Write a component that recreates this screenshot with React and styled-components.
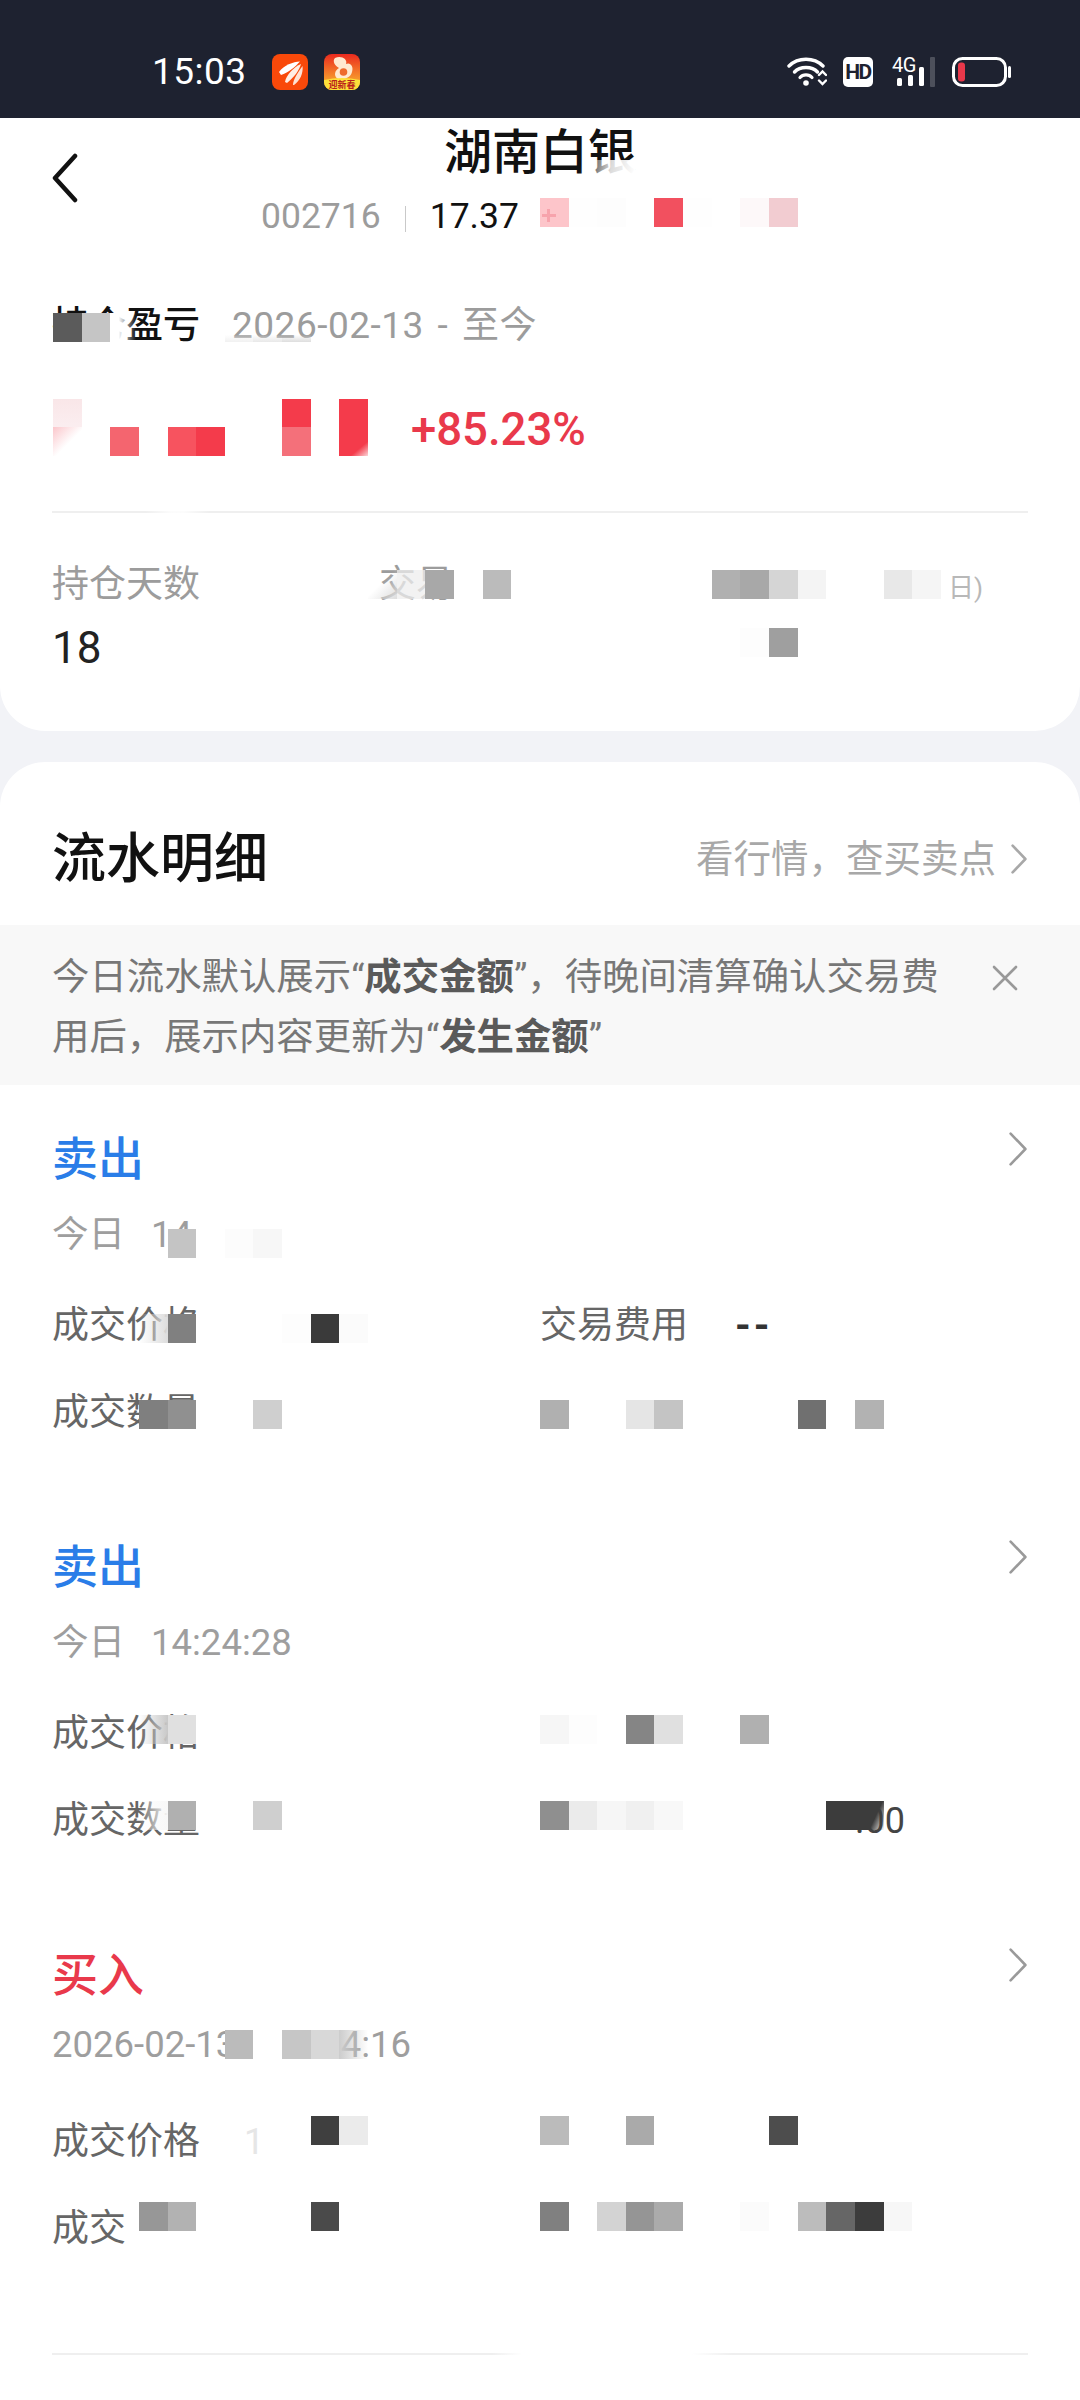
import React from "react";
import styled, { createGlobalStyle } from "styled-components";

const FONT = `Roboto, "Noto Sans CJK SC", sans-serif`;

const Global = createGlobalStyle`
  html, body { margin: 0; padding: 0; background: #f2f3f7; }
  body { font-family: ${FONT}; }
`;

const Page = styled.div`
  position: relative;
  width: 1080px;
  height: 2400px;
  overflow: hidden;
  background: #f2f3f7;
  font-family: ${FONT};
`;

const StatusBar = styled.div`
  height: 118px;
  box-sizing: border-box;
  background: #1e2230;
  display: flex;
  align-items: flex-start;
  padding: 54px 69px 0 152px;
  color: #fff;
`;
const Clock = styled.div`
  font-size: 37px;
  line-height: 36px;
  width: 120px;
  letter-spacing: 0.5px;
`;
const AppIcon = styled.svg`
  width: 36px;
  height: 36px;
  margin-right: 16px;
  display: block;
`;
const StatusRight = styled.div`
  margin-left: auto;
  display: flex;
  align-items: flex-start;
  padding-top: 3px;
`;
const WifiIcon = styled.svg`
  width: 40px;
  height: 30px;
  margin-right: 16px;
`;
const HdBadge = styled.div`
  width: 30px;
  height: 30px;
  background: #fff;
  border-radius: 5px;
  color: #1e2230;
  font-size: 21px;
  font-weight: 700;
  letter-spacing: -1.5px;
  display: flex;
  align-items: center;
  justify-content: center;
  margin-right: 17px;
`;
const SignalIcon = styled.svg`
  width: 45px;
  height: 30px;
  margin-right: 17px;
`;
const BatteryIcon = styled.svg`
  width: 59px;
  height: 30px;
`;

const TopCard = styled.section`
  background: #fff;
  border-radius: 0 0 45px 45px;
  height: 613px;
  box-sizing: border-box;
  padding: 0 52px;
  display: flex;
  flex-direction: column;
`;
const Header = styled.header`
  position: relative;
  height: 135px;
  flex: none;
  display: flex;
  flex-direction: column;
  align-items: center;
`;
const BackButton = styled.svg`
  position: absolute;
  left: 0;
  top: 35px;
  width: 26px;
  height: 50px;
`;
const Title = styled.h1`
  margin: 0;
  font-size: 48px;
  font-weight: 500;
  line-height: 64px;
  color: #111;
  height: 78px;
  padding-top: 3px;
  box-sizing: border-box;
`;
const QuoteRow = styled.div`
  align-self: flex-start;
  display: flex;
  align-items: center;
  height: 40px;
  margin-left: 209px;
  font-size: 35.5px;
`;
const Code = styled.span`
  color: #9c9c9c;
`;
const Sep = styled.i`
  width: 1px;
  height: 26px;
  background: #c9c9c9;
  margin: 6px 24px 0 24px;
`;
const Price = styled.span`
  color: #111;
`;
const ProfitHead = styled.div`
  display: flex;
  align-items: center;
  margin-top: 47px;
  height: 44px;
  font-size: 37px;
`;
const ProfitLabel = styled.span`
  font-weight: 500;
  color: #111;
  width: 180px;
`;
const DateRange = styled.span`
  color: #9c9c9c;
  letter-spacing: 0.5px;
  word-spacing: 4px;
`;
const ProfitRow = styled.div`
  margin-top: 61px;
  height: 50px;
  padding-left: 359px;
  font-size: 45.5px;
  line-height: 50px;
  color: #e9394b;
  font-weight: 500;
`;
const Rule = styled.hr`
  margin: 56px 0 0;
  border: 0;
  flex: none;
  height: 2px;
  background: #efefef;
`;
const Stats = styled.div`
  margin-top: 50px;
  display: grid;
  grid-template-columns: 327px 1fr;
`;
const StatColumn = styled.div`
  display: flex;
  flex-direction: column;
`;
const StatLabel = styled.div`
  font-size: 37px;
  line-height: 44px;
  color: #9c9c9c;
`;
const StatValue = styled.div`
  margin-top: 16px;
  font-size: 44px;
  line-height: 50px;
  color: #222;
`;
const Tail = styled.span`
  position: absolute;
  left: 948px;
  top: 568px;
  font-size: 26px;
  line-height: 40px;
  color: #b8b8b8;
`;

const FlowCard = styled.section`
  margin-top: 31px;
  background: #fff;
  border-radius: 45px 45px 0 0;
  height: 1638px;
  display: flex;
  flex-direction: column;
`;
const FlowHead = styled.div`
  height: 163px;
  flex: none;
  box-sizing: border-box;
  padding: 62px 52px 0;
  display: flex;
  align-items: flex-start;
  justify-content: space-between;
`;
const FlowTitle = styled.h2`
  margin: 0;
  font-size: 54px;
  line-height: 72px;
  font-weight: 500;
  color: #111;
`;
const MarketLink = styled.div`
  display: flex;
  align-items: center;
  gap: 14px;
  margin-top: 13px;
  font-size: 37.5px;
  line-height: 44px;
  color: #a8a8a8;
`;
const Chevron = styled.svg`
  width: ${(p) => p.$w}px;
  height: ${(p) => p.$h}px;
  display: block;
  flex: none;
`;
const Notice = styled.div`
  height: 160px;
  flex: none;
  box-sizing: border-box;
  background: #f8f8f8;
  padding: 22px 62px 0 52px;
  display: flex;
  justify-content: space-between;
  font-size: 37.4px;
  line-height: 60px;
  color: #777;
`;
const NoticeText = styled.p`
  margin: 0;
  width: 892px;
  b { color: #5a5a5a; font-weight: 700; }
`;
const CloseIcon = styled.svg`
  width: 26px;
  height: 26px;
  margin-top: 18px;
  flex: none;
`;
const Trade = styled.article`
  height: 408px;
  flex: none;
  box-sizing: border-box;
  padding: 46px 52px 0;
  display: flex;
  flex-direction: column;
`;
const TradeTop = styled.div`
  display: flex;
  align-items: flex-start;
  justify-content: space-between;
  height: 56px;
`;
const TradeKind = styled.div`
  font-size: 46px;
  line-height: 56px;
  font-weight: 500;
  color: ${(p) => (p.$buy ? "#e9394b" : "#2a7de8")};
`;
const TradeTime = styled.div`
  margin-top: ${(p) => (p.$wide ? 20 : 26)}px;
  margin-bottom: ${(p) => (p.$wide ? 6 : 0)}px;
  height: 44px;
  display: flex;
  gap: ${(p) => (p.$wide ? 34 : 26)}px;
  font-size: 36.5px;
  line-height: 44px;
  color: #9e9e9e;
`;
const Row = styled.div`
  margin-top: ${(p) => p.$top}px;
  height: 44px;
  display: grid;
  grid-template-columns: 488px 195px 1fr;
  font-size: 37px;
  line-height: 44px;
  color: #666;
`;
const FaintDigit = styled.span`
  color: #e6e6e6;
  margin-left: 44px;
  font-size: 36px;
`;
const Dashes = styled.span`
  color: #333;
  font-size: 40px;
  font-weight: 700;
  letter-spacing: 3px;
`;
const Cents = styled.span`
  color: #444;
  padding-left: 120px;
  font-size: 36px;
`;
const BottomRule = styled.hr`
  position: absolute;
  left: 52px;
  right: 52px;
  top: 2353px;
  margin: 0;
  border: 0;
  height: 2px;
  background: linear-gradient(90deg, #efefef 0, #efefef 440px, #fff 470px, #fff 640px, #efefef 680px);
`;

const MosaicLayer = styled.div`
  position: absolute;
  inset: 0;
  pointer-events: none;
`;
const Strip = styled.div`
  position: absolute;
  left: 53px;
  top: ${(p) => p.$top}px;
  display: grid;
  grid-template-columns: repeat(35, 28.65px);
  height: 29px;
`;
const Cell = styled.i`
  grid-column: ${(p) => p.$col + 1};
  grid-row: 1;
  background: ${(p) => p.$bg};
`;
const Smudge = styled.div`
  position: absolute;
  left: ${(p) => p.$left}px;
  top: ${(p) => p.$top}px;
  width: ${(p) => p.$w}px;
  height: ${(p) => p.$h}px;
  background: ${(p) => p.$bg};
`;

const PLUS =
  "linear-gradient(#f7a3ac,#f7a3ac) 2px 16px/14px 3px no-repeat, linear-gradient(#f7a3ac,#f7a3ac) 7px 11px/3px 13px no-repeat, #fdc5ca";

const STRIPS = [
  [198, [[17, PLUS], [18, "#fefefe"], [19, "#fdfdfd"], [21, "#f2505f"], [22, "#fefefe"], [24, "#fdf8f9"], [25, "#f2ccd1"]]],
  [313, [[0, "#5b5b5b"], [1, "#c5c5c5"], [2, "linear-gradient(90deg,#fff 30%,transparent 90%)"], [6, "linear-gradient(180deg,transparent 75%,#f1f1f1)"], [7, "linear-gradient(180deg,transparent 75%,#e8e8e8)"], [8, "linear-gradient(180deg,transparent 75%,#dedede)"]]],
  [399, [[0, "linear-gradient(180deg,#f9e6e8,#fbeef0)"], [8, "#f43b4b"], [10, "#f43b4b"]]],
  [427, [[0, "linear-gradient(135deg,#fbc6cb,#fff 55%)"], [2, "#f4656f"], [4, "#f7535f"], [5, "#f43b4b"], [8, "#f4707a"], [10, "linear-gradient(140deg,#f43b4b 72%,#fbd6d9)"]]],
  [570, [[11, "linear-gradient(135deg,transparent 45%,#ddd)"], [12, "rgba(238,238,238,0.75)"], [13, "#a8a8a8"], [15, "#bbbbbb"], [23, "#b0b0b0"], [24, "#a8a8a8"], [25, "#d5d5d5"], [26, "#f4f4f4"], [29, "#e8e8e8"], [30, "#f5f5f5"]]],
  [628, [[24, "#fdfdfd"], [25, "#9f9f9f"]]],
  [1229, [[4, "#c4c4c4"], [6, "#fcfcfc"], [7, "#f7f7f7"]]],
  [1314, [[3, "linear-gradient(90deg,transparent,#ddd)"], [4, "#808080"], [5, "#ffffff"], [8, "#fdfdfd"], [9, "#3a3a3a"], [10, "#fbfbfb"]]],
  [1400, [[3, "#7f7f7f"], [4, "#909090"], [5, "#ffffff"], [7, "#cfcfcf"], [17, "#b0b0b0"], [20, "#e5e5e5"], [21, "#c4c4c4"], [26, "#707070"], [28, "#b2b2b2"]]],
  [1715, [[3, "linear-gradient(90deg,transparent,#c8c8c8)"], [4, "#e0e0e0"], [5, "#ffffff"], [17, "#f6f6f6"], [18, "#fdfdfd"], [20, "#858585"], [21, "#e0e0e0"], [24, "#b0b0b0"]]],
  [1801, [[3, "linear-gradient(90deg,transparent,#f8f8f8)"], [4, "#b0b0b0"], [5, "#ffffff"], [7, "#cfcfcf"], [17, "#8f8f8f"], [18, "#ebebeb"], [19, "#f6f6f6"], [20, "#f0f0f0"], [21, "#f8f8f8"], [27, "#3c3c3c"], [28, "linear-gradient(115deg,#3c3c3c 65%,transparent)"]]],
  [2030, [[6, "#bbbbbb"], [7, "#ffffff"], [8, "#c6c6c6"], [9, "#d8d8d8"], [10, "linear-gradient(90deg,#ccc,transparent)"]]],
  [2116, [[9, "#3f3f3f"], [10, "#ebebeb"], [17, "#bbbbbb"], [20, "#aaaaaa"], [25, "#4d4d4d"]]],
  [2202, [[3, "#979797"], [4, "#b2b2b2"], [9, "#4a4a4a"], [17, "#808080"], [19, "#d3d3d3"], [20, "#959595"], [21, "#ababab"], [24, "#fbfbfb"], [26, "#bcbcbc"], [27, "#666666"], [28, "#3c3c3c"], [29, "#f7f7f7"]]],
];

const ChevronRight = ({ w, h, color, sw }) => (
  <Chevron $w={w} $h={h} viewBox={`0 0 ${w} ${h}`} fill="none" stroke={color} strokeWidth={sw} strokeLinecap="round" strokeLinejoin="round">
    <path d={`M${sw} ${sw}L${w - sw} ${h / 2}L${sw} ${h - sw}`} />
  </Chevron>
);

const TRADES = [
  { kind: "卖出", day: "今日", time: "14", price: "成交价格", fee: "交易费用", dashes: "--", qty: "成交数量" },
  { kind: "卖出", day: "今日", time: "14:24:28", price: "成交价格", qty: "成交数量", cents: ".00" },
  { kind: "买入", buy: true, wide: true, day: "2026-02-13", time: "14:24:16", price: "成交价格", digit: "1", qty: "成交" },
];

export default function App() {
  return (
    <Page>
      <Global />
      <StatusBar>
        <Clock>15:03</Clock>
        <AppIcon viewBox="0 0 36 36">
          <rect width="36" height="36" rx="8" fill="#f9490a" />
          <path d="M7 18C12 11 21 8 28 7.5C23 13 16 19 9 21Z" fill="#fff" />
          <path d="M13 28C14 21 22 13 29 10C27 17 22 23 15 29Z" fill="#ffeee4" />
          <path d="M21 31C21 25 27 17 30.5 12C31.5 19 28 27 22 31Z" fill="#ffe2d3" />
        </AppIcon>
        <AppIcon viewBox="0 0 36 36">
          <defs>
            <linearGradient id="uc" x1="0" y1="0" x2="0" y2="1">
              <stop offset="0" stopColor="#ea2a1e" />
              <stop offset="0.7" stopColor="#f7972c" />
            </linearGradient>
          </defs>
          <rect width="36" height="36" rx="8" fill="url(#uc)" />
          <path d="M11 4C17 1 24 5 22 10C26 8 30 12 28 18C27 23 21 26 14 25C9 22 11 16 15 14C11 12 8 7 11 4Z" fill="#ffe9cf" />
          <circle cx="19.5" cy="18" r="3.8" fill="#ee6a2c" />
          <path d="M0 26Q18 22 36 26V28a8 8 0 0 1-8 8H8a8 8 0 0 1-8-8Z" fill="#fde03a" />
          <text x="18" y="34" textAnchor="middle" fontSize="9" fontWeight="700" fill="#b9201a" fontFamily='"Noto Sans CJK SC", sans-serif'>迎新春</text>
        </AppIcon>
        <StatusRight>
          <WifiIcon viewBox="0 0 40 30" fill="none" stroke="#fff" strokeLinecap="round">
            <path d="M2 9C11 0 27 0 36 9" strokeWidth="3.4" />
            <path d="M7.5 15C13 9 25 9 30.5 15" strokeWidth="3.4" />
            <path d="M13 20.5C16 17 22 17 25 20.5" strokeWidth="3.2" />
            <circle cx="19" cy="26" r="2.8" fill="#fff" stroke="none" />
            <path d="M32 18L35.5 14.5L39 18M32 23.5L35.5 27L39 23.5" strokeWidth="2.4" />
          </WifiIcon>
          <HdBadge>HD</HdBadge>
          <SignalIcon viewBox="0 0 45 30">
            <text x="2" y="15" fill="#fff" fontSize="20" fontFamily="Roboto, sans-serif" letterSpacing="-0.5">4G</text>
            <rect x="7" y="21" width="5" height="8" rx="1.5" fill="#fff" />
            <rect x="18" y="18" width="5" height="11" rx="1.5" fill="#fff" />
            <rect x="29" y="10" width="5" height="19" rx="1.5" fill="#fff" />
            <rect x="40" y="0" width="5" height="30" rx="1" fill="#4d505b" />
          </SignalIcon>
          <BatteryIcon viewBox="0 0 59 30">
            <rect x="1.5" y="1.5" width="52" height="27" rx="9" fill="none" stroke="#fff" strokeWidth="3" />
            <rect x="6" y="5.5" width="7" height="19" rx="3" fill="#e8384a" />
            <rect x="56" y="9" width="3" height="12" rx="1.5" fill="#fff" />
          </BatteryIcon>
        </StatusRight>
      </StatusBar>

      <TopCard>
        <Header>
          <BackButton viewBox="0 0 26 50" fill="none" stroke="#111" strokeWidth="4.5" strokeLinecap="round" strokeLinejoin="round">
            <path d="M23 3L3 25L23 47" />
          </BackButton>
          <Title>湖南白银</Title>
          <QuoteRow>
            <Code>002716</Code>
            <Sep />
            <Price>17.37</Price>
          </QuoteRow>
        </Header>
        <ProfitHead>
          <ProfitLabel>持仓盈亏</ProfitLabel>
          <DateRange>2026-02-13 - 至今</DateRange>
        </ProfitHead>
        <ProfitRow>+85.23%</ProfitRow>
        <Rule />
        <Stats>
          <StatColumn>
            <StatLabel>持仓天数</StatLabel>
            <StatValue>18</StatValue>
          </StatColumn>
          <StatColumn>
            <StatLabel>交易</StatLabel>
          </StatColumn>
        </Stats>
      </TopCard>
      <Tail>日)</Tail>

      <FlowCard>
        <FlowHead>
          <FlowTitle>流水明细</FlowTitle>
          <MarketLink>
            看行情，查买卖点
            <ChevronRight w={18} h={32} color="#a8a8a8" sw={2.6} />
          </MarketLink>
        </FlowHead>
        <Notice>
          <NoticeText>
            今日流水默认展示“<b>成交金额</b>”，待晚间清算确认交易费用后，展示内容更新为“<b>发生金额</b>”
          </NoticeText>
          <CloseIcon viewBox="0 0 26 26" fill="none" stroke="#999" strokeWidth="2.6" strokeLinecap="round">
            <path d="M2 2L24 24M24 2L2 24" />
          </CloseIcon>
        </Notice>
        {TRADES.map((t, i) => (
          <Trade key={i}>
            <TradeTop>
              <TradeKind $buy={t.buy}>{t.kind}</TradeKind>
              <ChevronRight w={20} h={36} color="#9a9a9a" sw={2.6} />
            </TradeTop>
            <TradeTime $wide={t.wide}>
              <span>{t.day}</span>
              <span>{t.time}</span>
            </TradeTime>
            <Row $top={47}>
              <span>
                {t.price}
                {t.digit && <FaintDigit>{t.digit}</FaintDigit>}
              </span>
              <span>{t.fee}</span>
              {t.dashes && <Dashes>{t.dashes}</Dashes>}
            </Row>
            <Row $top={43}>
              <span>{t.qty}</span>
              <span />
              {t.cents && <Cents>{t.cents}</Cents>}
            </Row>
          </Trade>
        ))}
      </FlowCard>
      <BottomRule />

      <MosaicLayer>
        <Smudge $left={575} $top={160} $w={60} $h={14} $bg="linear-gradient(100deg,transparent 10%,rgba(255,255,255,0.85) 60%,#fff)" />
        <Smudge $left={145} $top={510} $w={65} $h={4} $bg="linear-gradient(90deg,transparent,rgba(255,255,255,0.8) 40%,rgba(255,255,255,0.8) 60%,transparent)" />
        {STRIPS.map(([top, cells]) => (
          <Strip key={top} $top={top}>
            {cells.map(([col, bg]) => (
              <Cell key={col} $col={col} $bg={bg} />
            ))}
          </Strip>
        ))}
      </MosaicLayer>
    </Page>
  );
}
